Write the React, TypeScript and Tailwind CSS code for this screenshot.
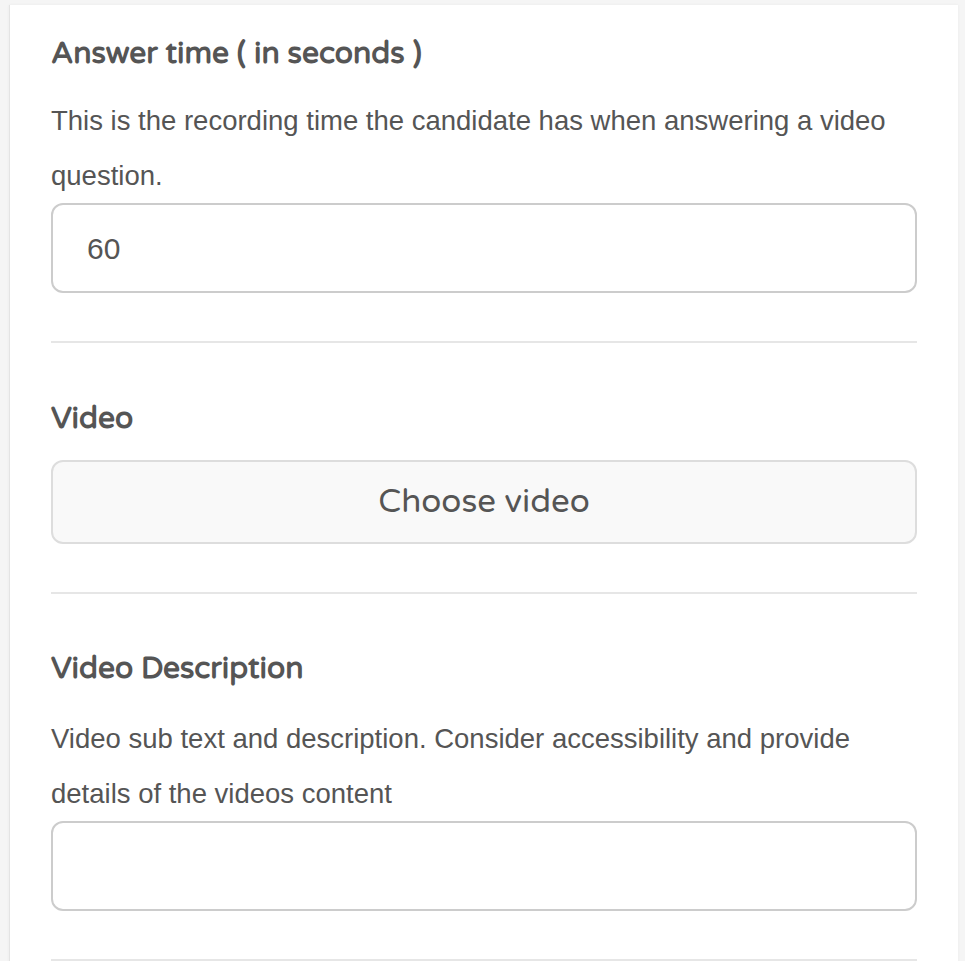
import React from 'react'

const heading = "text-[#555] text-[30px] leading-[40px] font-bold"
const body = "text-[#555] text-[27.5px] leading-[55px] font-['Liberation_Sans',Arial,sans-serif]"
const headFont = { fontFamily: "'Varela Round', 'Open Sans', sans-serif" }

function Divider() {
  return <div className="h-[2px] bg-[#e6e6e6] mt-[48px]" />
}

export default function App() {
  return (
    <div className="min-h-screen bg-[#f5f5f5] pt-[5px] pl-[9px] pr-[7px] overflow-hidden">
      <div className="bg-white border-l border-[#e4e4e4] shadow-[0_0_3px_rgba(0,0,0,0.05)] px-[41px] pt-[25px] pb-[40px]">
        {/* answer time */}
        <h2 className={`${heading} pt-[4px] mb-[19px]`} style={headFont}>Answer time ( in seconds )</h2>
        <p className={body}>
          This is the recording time the candidate has when answering a video question.
        </p>
        <div className="h-[90px] border-2 border-[#cccccc] rounded-[12px] flex items-center px-[34px]">
          <span className="text-[#555] text-[30px] font-['Liberation_Sans',Arial,sans-serif]">60</span>
        </div>
        <Divider />

        {/* video */}
        <h2 className={`${heading} mt-[54px] pt-[2px] mb-[21px]`} style={headFont}>Video</h2>
        <button
          className="w-full h-[84px] bg-[#f9f9f9] border-2 border-[#dddddd] rounded-[12px] text-[#555] text-[33px]"
          style={headFont}
        >
          Choose video
        </button>
        <Divider />

        {/* description */}
        <h2 className={`${heading} mt-[54px] pt-[1px] mb-[22px]`} style={headFont}>Video Description</h2>
        <p className={body}>
          Video sub text and description. Consider accessibility and provide details of the videos content
        </p>
        <div className="h-[90px] border-2 border-[#cccccc] rounded-[12px]" />
        <Divider />
      </div>
    </div>
  )
}
